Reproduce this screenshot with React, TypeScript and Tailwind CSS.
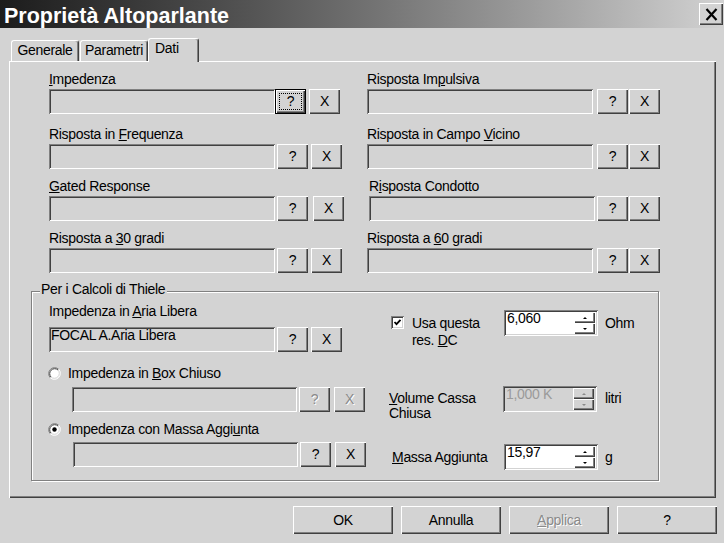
import React, { ReactNode } from "react";

const raised = "shadow-[inset_1px_1px_0_#ffffff,inset_-1px_-1px_0_#404040,inset_-2px_-2px_0_#808080]";
const sunken = "shadow-[inset_1px_1px_0_#808080,inset_-1px_-1px_0_#ffffff,inset_2px_2px_0_#404040,inset_-2px_-2px_0_#d3d3d3]";
const tab =
  "flex rounded-t-[3px] border-l border-t border-r border-l-white border-t-white border-r-[#404040] shadow-[inset_-1px_0_0_#808080] bg-[#d3d3d3]";

const U = ({ children }: { children: ReactNode }) => <span className="underline">{children}</span>;

type BtnProps = { children: ReactNode; disabled?: boolean; focused?: boolean; className?: string };

const SmallButton = ({ children, disabled, focused, className = "" }: BtnProps) => (
  <div
    className={`flex h-[25px] w-[31px] items-center justify-center ${raised} ${focused ? "border border-black" : ""} ${
      disabled ? "text-[#8a8a8a] [text-shadow:1px_1px_0_#ffffff]" : ""
    } ${className}`}
  >
    {focused ? (
      <div className="m-[3px] flex flex-1 self-stretch items-center justify-center border border-dotted border-black">
        {children}
      </div>
    ) : (
      children
    )}
  </div>
);

const TextBox = ({ value, className = "" }: { value?: string; className?: string }) => (
  <div className={`h-[25px] whitespace-nowrap pl-[2px] pt-[2px] leading-[13px] ${sunken} ${className}`}>{value}</div>
);

type FieldProps = {
  label: ReactNode;
  value?: string;
  inputCls?: string;
  qCls?: string;
  xCls?: string;
  focused?: boolean;
  disabled?: boolean;
  labelH?: string;
  className?: string;
};

const Field = ({
  label,
  value = "",
  inputCls = "w-[226px]",
  qCls = "ml-[2px]",
  xCls = "ml-[3px]",
  focused,
  disabled,
  labelH = "h-[17px]",
  className = ""
}: FieldProps) => (
  <div className={`flex flex-col ${className}`}>
    <div className={`${labelH} whitespace-nowrap`}>{label}</div>
    <div className="flex">
      <TextBox value={value} className={inputCls} />
      <SmallButton focused={focused} disabled={disabled} className={qCls}>
        ?
      </SmallButton>
      <SmallButton disabled={disabled} className={xCls}>
        X
      </SmallButton>
    </div>
  </div>
);

const Radio = ({ checked }: { checked?: boolean }) => (
  <svg width="13" height="13" viewBox="0 0 13 13" className="shrink-0">
    <circle cx="6.5" cy="6.5" r="5.5" fill="#ffffff" />
    <path d="M2.26 10.74 A6 6 0 0 1 10.74 2.26" fill="none" stroke="#808080" strokeWidth="1" />
    <path d="M10.74 2.26 A6 6 0 0 1 2.26 10.74" fill="none" stroke="#ffffff" strokeWidth="1" />
    <path d="M2.97 10.03 A5 5 0 0 1 10.03 2.97" fill="none" stroke="#404040" strokeWidth="1" />
    <path d="M10.03 2.97 A5 5 0 0 1 2.97 10.03" fill="none" stroke="#d3d3d3" strokeWidth="1" />
    {checked && <circle cx="6.5" cy="6.5" r="2.2" fill="#000000" />}
  </svg>
);

const Checkbox = () => (
  <div className={`flex h-[13px] w-[13px] shrink-0 items-center justify-center bg-white ${sunken}`}>
    <svg width="9" height="9" viewBox="0 0 9 9">
      <polyline points="1.5,4 3.5,6.2 7.5,1.8" fill="none" stroke="#000000" strokeWidth="1.8" />
    </svg>
  </div>
);

const SpinHalf = ({ up, disabled }: { up?: boolean; disabled?: boolean }) => (
  <div className={`flex flex-1 items-center justify-center ${raised}`}>
    <div
      className={`h-0 w-0 border-l-[2px] border-r-[2px] border-l-transparent border-r-transparent ${
        up
          ? disabled
            ? "border-b-[2px] border-b-[#8a8a8a]"
            : "border-b-[2px] border-b-black"
          : disabled
          ? "border-t-[2px] border-t-[#8a8a8a]"
          : "border-t-[2px] border-t-black"
      }`}
    />
  </div>
);

const Spin = ({ value, disabled, className = "" }: { value: string; disabled?: boolean; className?: string }) => (
  <div
    className={`flex h-[26px] w-[94px] shrink-0 p-[2px] ${sunken} ${disabled ? "bg-[#d3d3d3] text-[#9a9a9a]" : "bg-white"} ${className}`}
  >
    <div className="flex-1 pl-[1px] leading-[13px]">{value}</div>
    <div className="mr-[1px] flex w-[21px] flex-col">
      <SpinHalf up disabled={disabled} />
      <SpinHalf disabled={disabled} />
    </div>
  </div>
);

const BigButton = ({ children, disabled }: { children: ReactNode; disabled?: boolean }) => (
  <div
    className={`flex h-[28px] w-[100px] items-center justify-center ${raised} ${
      disabled ? "text-[#8a8a8a] [text-shadow:1px_1px_0_#ffffff]" : ""
    }`}
  >
    {children}
  </div>
);

export default function App() {
  return (
    <div className="flex h-[543px] w-[724px] flex-col overflow-hidden bg-[#d3d3d3] font-['Liberation_Sans',Arial,sans-serif] text-[14px] leading-[15px] tracking-[-0.3px] text-black">
      {/* barra del titolo */}
      <div className="flex h-[28px] shrink-0 items-center justify-between bg-linear-to-r from-[#1c1c1c] to-[#d2d2d2] pl-[4px] pr-[1px]">
        <span className="pt-[3px] text-[21.5px] font-bold leading-[28px] tracking-normal text-white">Proprietà Altoparlante</span>
        <div className={`flex h-[22px] w-[24px] items-center justify-center bg-[#d3d3d3] ${raised}`}>
          <svg width="13" height="13" viewBox="0 0 13 13">
            <path d="M1.5 1L11.5 12M11.5 1L1.5 12" stroke="#000000" strokeWidth="2.2" />
          </svg>
        </div>
      </div>

      {/* schede */}
      <div className="flex h-[33px] shrink-0 items-end pl-[11px]">
        <div className={`${tab} h-[21px] w-[68px] justify-center pt-[2px]`}>Generale</div>
        <div className={`${tab} ml-[1px] h-[21px] w-[68px] justify-center pt-[2px]`}>Parametri</div>
        <div className={`${tab} relative z-10 -mb-[1px] h-[24px] w-[51px] pl-[6px] pt-[2px]`}>Dati</div>
      </div>

      {/* pannello Dati */}
      <div
        className={`ml-[9px] h-[437px] w-[707px] shrink-0 pl-[22px] pt-[11px] shadow-[inset_1px_1px_0_#ffffff,inset_-1px_-1px_0_#404040,inset_-2px_-2px_0_#808080]`}
      >
        <div className="flex flex-col pl-[18px]">
          <div className="flex">
            <Field
              className="w-[318px]"
              label={
                <>
                  <U>I</U>mpedenza
                </>
              }
              focused
              qCls="ml-0"
              xCls="ml-[3px]"
            />
            <Field
              label={
                <>
                  Risposta Im<U>p</U>ulsiva
                </>
              }
              qCls="ml-[4px]"
              xCls="ml-[1px]"
            />
          </div>
          <div className="mt-[13px] flex">
            <Field
              className="w-[318px]"
              label={
                <>
                  Risposta in <U>F</U>requenza
                </>
              }
            />
            <Field
              label={
                <>
                  Risposta in Campo <U>V</U>icino
                </>
              }
              qCls="ml-[4px]"
              xCls="ml-[1px]"
            />
          </div>
          <div className="mt-[10px] flex">
            <Field
              className="w-[318px]"
              label={
                <>
                  <U>G</U>ated Response
                </>
              }
              xCls="ml-[5px]"
            />
            <Field
              className="ml-[2px]"
              label={
                <>
                  R<U>i</U>sposta Condotto
                </>
              }
              qCls="ml-[2px]"
              xCls="ml-[1px]"
            />
          </div>
          <div className="mt-[10px] flex">
            <Field
              className="w-[318px]"
              label={
                <>
                  Risposta a <U>3</U>0 gradi
                </>
              }
            />
            <Field
              label={
                <>
                  Risposta a <U>6</U>0 gradi
                </>
              }
              qCls="ml-[4px]"
              xCls="ml-[1px]"
            />
          </div>
        </div>

        {/* gruppo Thiele */}
        <div className="relative mt-[18px] flex h-[190px] w-[628px] border border-[#808080] pl-[17px] shadow-[inset_1px_1px_0_#ffffff,1px_1px_0_#ffffff]">
          <span className="absolute left-[8px] top-[-10px] bg-[#d3d3d3] pl-[1px] pr-[2px]">Per i Calcoli di Thiele</span>

          <div className="flex w-[340px] flex-col pt-[12px]">
            <Field
              labelH="h-[23px]"
              label={
                <>
                  Impedenza in <U>A</U>ria Libera
                </>
              }
              value="FOCAL A.Aria Libera"
            />
            <div className="-ml-[1px] mt-[14px] flex h-[15px] items-center gap-[7px]">
              <Radio />
              <span>
                Impedenza in <U>B</U>ox Chiuso
              </span>
            </div>
            <div className="ml-[23px] mt-[6px] flex">
              <TextBox className="w-[225px]" />
              <SmallButton disabled className="ml-[2px] w-[30px]">
                ?
              </SmallButton>
              <SmallButton disabled className="ml-[4px] w-[30px]">
                X
              </SmallButton>
            </div>
            <div className="-ml-[1px] mt-[10px] flex h-[15px] items-center gap-[7px]">
              <Radio checked />
              <span>
                Impedenza con Massa Aggi<U>u</U>nta
              </span>
            </div>
            <div className="ml-[24px] mt-[5px] flex">
              <TextBox className="w-[225px]" />
              <SmallButton className="ml-[2px] w-[30px]">?</SmallButton>
              <SmallButton className="ml-[4px] w-[30px]">X</SmallButton>
            </div>
          </div>

          <div className="flex flex-col pt-[18px]">
            <div className="flex h-[26px] items-start">
              <div className="flex w-[115px] pl-[2px] pt-[6px]">
                <Checkbox />
                <span className="-mt-[1px] ml-[8px] leading-[17px]">
                  Usa questa
                  <br />
                  res. <U>D</U>C
                </span>
              </div>
              <Spin value="6,060" />
              <span className="ml-[7px] pt-[6px]">Ohm</span>
            </div>
            <div className="mt-[50px] flex h-[26px] items-start">
              <span className="w-[114px] pt-[5px]">
                <U>V</U>olume Cassa
                <br />
                Chiusa
              </span>
              <Spin value="1,000 K" disabled />
              <span className="ml-[8px] pt-[5px]">litri</span>
            </div>
            <div className="mt-[32px] flex h-[26px] items-start">
              <span className="w-[115px] pl-[3px] pt-[6px]">
                <U>M</U>assa Aggiunta
              </span>
              <Spin value="15,97" />
              <span className="ml-[7px] pt-[6px]">g</span>
            </div>
          </div>
        </div>
      </div>

      {/* pulsanti */}
      <div className="mt-[8px] flex justify-end gap-[8px] pr-[7px]">
        <BigButton>OK</BigButton>
        <BigButton>Annulla</BigButton>
        <BigButton disabled>
          <span>
            <U>A</U>pplica
          </span>
        </BigButton>
        <BigButton>?</BigButton>
      </div>
    </div>
  );
}
